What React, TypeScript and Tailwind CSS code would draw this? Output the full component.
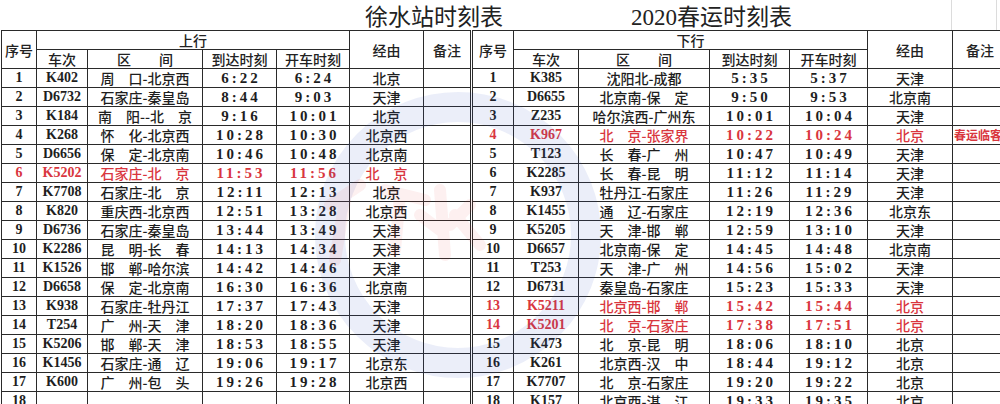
import React from 'react';

type Row = {
  no: number;
  train: string;
  route: string;
  arrive: string;
  depart: string;
  via: string;
  note?: string;
  red?: boolean;
};

const up: Row[] = [
  { no: 1, train: 'K402', route: '周　口-北京西', arrive: '6:22', depart: '6:24', via: '北京' },
  { no: 2, train: 'D6732', route: '石家庄-秦皇岛', arrive: '8:44', depart: '9:03', via: '天津' },
  { no: 3, train: 'K184', route: '南　阳--北　京', arrive: '9:16', depart: '10:01', via: '北京' },
  { no: 4, train: 'K268', route: '怀　化-北京西', arrive: '10:28', depart: '10:30', via: '北京西' },
  { no: 5, train: 'D6656', route: '保　定-北京南', arrive: '10:46', depart: '10:48', via: '北京南' },
  { no: 6, train: 'K5202', route: '石家庄-北　京', arrive: '11:53', depart: '11:56', via: '北　京', red: true },
  { no: 7, train: 'K7708', route: '石家庄-北　京', arrive: '12:11', depart: '12:13', via: '北京' },
  { no: 8, train: 'K820', route: '重庆西-北京西', arrive: '12:51', depart: '13:28', via: '北京西' },
  { no: 9, train: 'D6736', route: '石家庄-秦皇岛', arrive: '13:44', depart: '13:49', via: '天津' },
  { no: 10, train: 'K2286', route: '昆　明-长　春', arrive: '14:13', depart: '14:34', via: '天津' },
  { no: 11, train: 'K1526', route: '邯　郸-哈尔滨', arrive: '14:42', depart: '14:46', via: '天津' },
  { no: 12, train: 'D6658', route: '保　定-北京南', arrive: '16:30', depart: '16:36', via: '北京南' },
  { no: 13, train: 'K938', route: '石家庄-牡丹江', arrive: '17:37', depart: '17:43', via: '天津' },
  { no: 14, train: 'T254', route: '广　州-天　津', arrive: '18:20', depart: '18:36', via: '天津' },
  { no: 15, train: 'K5206', route: '邯　郸-天　津', arrive: '18:53', depart: '18:55', via: '天津' },
  { no: 16, train: 'K1456', route: '石家庄-通　辽', arrive: '19:06', depart: '19:17', via: '北京东' },
  { no: 17, train: 'K600', route: '广　州-包　头', arrive: '19:26', depart: '19:28', via: '北京西' },
  { no: 18, train: '', route: '', arrive: '', depart: '', via: '' },
];

const down: Row[] = [
  { no: 1, train: 'K385', route: '沈阳北-成都', arrive: '5:35', depart: '5:37', via: '天津' },
  { no: 2, train: 'D6655', route: '北京南-保　定', arrive: '9:50', depart: '9:53', via: '北京南' },
  { no: 3, train: 'Z235', route: '哈尔滨西-广州东', arrive: '10:01', depart: '10:04', via: '天津' },
  { no: 4, train: 'K967', route: '北　京-张家界', arrive: '10:22', depart: '10:24', via: '北京', note: '春运临客', red: true },
  { no: 5, train: 'T123', route: '长　春-广　州', arrive: '10:47', depart: '10:49', via: '天津' },
  { no: 6, train: 'K2285', route: '长　春-昆　明', arrive: '11:12', depart: '11:14', via: '天津' },
  { no: 7, train: 'K937', route: '牡丹江-石家庄', arrive: '11:26', depart: '11:29', via: '天津' },
  { no: 8, train: 'K1455', route: '通　辽-石家庄', arrive: '12:19', depart: '12:36', via: '北京东' },
  { no: 9, train: 'K5205', route: '天　津-邯　郸', arrive: '12:59', depart: '13:10', via: '天津' },
  { no: 10, train: 'D6657', route: '北京南-保　定', arrive: '14:45', depart: '14:48', via: '北京南' },
  { no: 11, train: 'T253', route: '天　津-广　州', arrive: '14:56', depart: '15:02', via: '天津' },
  { no: 12, train: 'D6731', route: '秦皇岛-石家庄', arrive: '15:23', depart: '15:33', via: '天津' },
  { no: 13, train: 'K5211', route: '北京西-邯　郸', arrive: '15:42', depart: '15:44', via: '北京', red: true },
  { no: 14, train: 'K5201', route: '北　京-石家庄', arrive: '17:38', depart: '17:51', via: '北京', red: true },
  { no: 15, train: 'K473', route: '北　京-昆　明', arrive: '18:06', depart: '18:10', via: '北京' },
  { no: 16, train: 'K261', route: '北京西-汉　中', arrive: '18:44', depart: '19:12', via: '北京' },
  { no: 17, train: 'K7707', route: '北　京-石家庄', arrive: '19:20', depart: '19:22', via: '北京' },
  { no: 18, train: 'K157', route: '北京西-湛　江', arrive: '19:33', depart: '19:35', via: '北京' },
];

const serif = 'font-["Liberation_Serif","Noto_Sans_CJK_SC",serif]';
const cell = 'border border-[#2a2a2a] p-0 h-[19px] leading-none text-center whitespace-nowrap overflow-hidden';
const num = `${cell} ${serif} font-bold text-[14px]`;
const time = `${cell} ${serif} font-bold text-[15px] tracking-[3px] pl-[3px]`;
const cjk = `${cell} font-["Noto_Sans_CJK_SC",sans-serif] font-medium text-[14px]`;
const head = `${cell} font-["Noto_Sans_CJK_SC",sans-serif] font-medium text-[14px] text-[#222]`;

const Half = ({ r, right }: { r: Row; right?: boolean }) => {
  const color = r.red ? 'text-[#d9363e]' : 'text-[#1e1e1e]';
  return (
    <>
      <td className={`${num} ${color} ${right ? 'border-l-[3px] [border-left-style:double]' : ''}`}>{r.no}</td>
      <td className={`${num} ${color}`}>{r.train}</td>
      <td className={`${cjk} ${color}`}>{r.route}</td>
      <td className={`${time} ${color}`}>{r.arrive}</td>
      <td className={`${time} ${color}`}>{r.depart}</td>
      <td className={`${cjk} ${color}`}>{r.via}</td>
      <td className={`${cell} font-["Noto_Sans_CJK_SC",sans-serif] font-bold text-[12px] text-left pl-[1px] text-[#d9363e]`}>
        {r.note ?? ''}
      </td>
    </>
  );
};

const App: React.FC = () => {
  return (
    <div className="relative w-[1000px] h-[404px] overflow-hidden bg-white">
      <div className="flex h-[30px] text-[#222]">
        <div className="w-[951px] flex items-center pt-[4px] font-['Liberation_Serif','Noto_Sans_CJK_SC',serif] text-[23px] leading-none">
          <span className="ml-[365px]">徐水站时刻表</span>
          <span className="ml-[128px]">2020春运时刻表</span>
        </div>
        <div className="w-[45px] border-l border-[#dcdcdc]" />
        <div className="flex-1 border-l border-[#dcdcdc]" />
      </div>

      <table className="table-fixed border-collapse w-[1013px] ml-[1px]">
        <colgroup>
          <col className="w-[35px]" />
          <col className="w-[51px]" />
          <col className="w-[115px]" />
          <col className="w-[74px]" />
          <col className="w-[73px]" />
          <col className="w-[74px]" />
          <col className="w-[48px]" />
          <col className="w-[42px]" />
          <col className="w-[65px]" />
          <col className="w-[131px]" />
          <col className="w-[80px]" />
          <col className="w-[78px]" />
          <col className="w-[85px]" />
          <col className="w-[62px]" />
        </colgroup>
        <thead>
          <tr className="h-[19px]">
            <th rowSpan={2} className={head}>序号</th>
            <th colSpan={4} className={head}>上行</th>
            <th rowSpan={2} className={head}>经由</th>
            <th rowSpan={2} className={head}>备注</th>
            <th rowSpan={2} className={`${head} border-l-[3px] [border-left-style:double]`}>序号</th>
            <th colSpan={4} className={head}>下行</th>
            <th rowSpan={2} className={head}>经由</th>
            <th rowSpan={2} className={`${head} text-left pl-[13px]`}>备注</th>
          </tr>
          <tr className="h-[19px]">
            <th className={head}>车次</th>
            <th className={head}>区　　间</th>
            <th className={head}>到达时刻</th>
            <th className={head}>开车时刻</th>
            <th className={head}>车次</th>
            <th className={head}>区　　间</th>
            <th className={head}>到达时刻</th>
            <th className={head}>开车时刻</th>
          </tr>
        </thead>
        <tbody>
          {up.map((r, i) => (
            <tr key={i} className="h-[19px]">
              <Half r={r} />
              <Half r={down[i]} right />
            </tr>
          ))}
        </tbody>
      </table>

      {/* faint station stamp behind the table */}
      <svg className="absolute inset-0 pointer-events-none" width="1000" height="404" viewBox="0 0 1000 404">
        <circle cx="458" cy="235" r="128" fill="none" stroke="#3b55c8" strokeOpacity="0.1" strokeWidth="30" />
        <path
          d="M330 205 l30 -20 M345 200 l-10 60 M385 190 l40 10 M400 195 l-5 55 M440 190 l5 65 M420 215 l20 15 M470 205 l-20 20 M455 215 l25 30"
          fill="none"
          stroke="#e23b3b"
          strokeOpacity="0.08"
          strokeWidth="12"
          strokeLinecap="round"
        />
      </svg>
    </div>
  );
};

export default App;
